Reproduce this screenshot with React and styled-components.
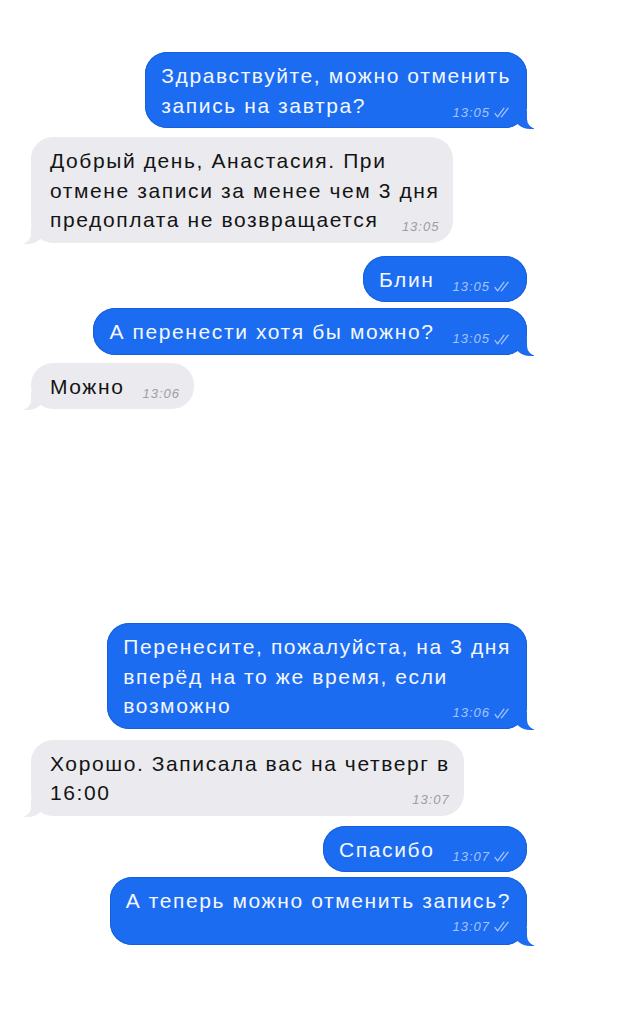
import React from 'react';
import styled, { createGlobalStyle, css } from 'styled-components';

const GlobalStyle = createGlobalStyle`
  html, body {
    margin: 0;
    background: #ffffff;
  }
  body {
    font-family: "Liberation Sans", Arial, sans-serif;
  }
`;

const BLUE = '#1c6cf1';
const GRAY = '#ebebef';

const Chat = styled.div`
  width: 640px;
  min-height: 1023px;
  box-sizing: border-box;
  padding: 52px 113px 40px 31px;
  display: flex;
  flex-direction: column;
`;

const Row = styled.div`
  display: flex;
  justify-content: ${(p) => (p.$mine ? 'flex-end' : 'flex-start')};
  margin-top: ${(p) => p.$gap}px;
`;

// little curled tail at the bottom corner, only on the last bubble of a run
const mineTail = css`
  &::before {
    content: '';
    position: absolute;
    bottom: -1px;
    right: -7px;
    width: 20px;
    height: 18px;
    background: ${BLUE};
    border-bottom-left-radius: 16px 14px;
  }
  &::after {
    content: '';
    position: absolute;
    bottom: -1px;
    right: -12px;
    width: 12px;
    height: 20px;
    background: #ffffff;
    border-bottom-left-radius: 10px;
  }
`;

const theirTail = css`
  &::before {
    content: '';
    position: absolute;
    bottom: -1px;
    left: -7px;
    width: 20px;
    height: 18px;
    background: ${GRAY};
    border-bottom-right-radius: 16px 14px;
  }
  &::after {
    content: '';
    position: absolute;
    bottom: -1px;
    left: -12px;
    width: 12px;
    height: 20px;
    background: #ffffff;
    border-bottom-right-radius: 10px;
  }
`;

const Bubble = styled.div`
  position: relative;
  display: inline-block;
  box-sizing: border-box;
  padding: ${(p) => (p.$mine ? '9px 16px 8px 16px' : '9px 14px 8px 19px')};
  border-radius: 22px;
  font-size: 21px;
  line-height: 29.5px;
  letter-spacing: 1.6px;
  white-space: nowrap;
  background: ${(p) => (p.$mine ? BLUE : GRAY)};
  color: ${(p) => (p.$mine ? '#f3f7ff' : '#141414')};
  box-shadow: ${(p) => (p.$mine ? 'inset 0 0 0 1px #1760dc' : 'none')};
  ${(p) => p.$tail && (p.$mine ? mineTail : theirTail)}
`;

const Text = styled.span`
  position: relative;
  z-index: 1;
`;

const Meta = styled.span`
  position: relative;
  z-index: 1;
  display: flex;
  align-items: center;
  gap: 3px;
  font-size: 13px;
  line-height: 16px;
  letter-spacing: 1px;
  font-style: italic;
  color: ${(p) => (p.$mine ? '#a6c3fb' : '#9d9da3')};
  ${(p) =>
    p.$stacked
      ? css`
          justify-content: flex-end;
          margin: 3px 0 2px;
        `
      : css`
          float: right;
          margin: 14px 0 -4px 18px;
        `}
`;

const Spacer = styled.div`
  height: ${(p) => p.$size}px;
  flex: none;
`;

const Ticks = () => (
  <svg width="18" height="11" viewBox="0 0 18 11" fill="none">
    <path d="M2 6.4 L4.6 9.8 L11 1.2" stroke="currentColor" strokeWidth="1.3" strokeLinecap="round" strokeLinejoin="round" />
    <path d="M8.4 9.8 L15.2 1.2" stroke="currentColor" strokeWidth="1.3" strokeLinecap="round" />
  </svg>
);

const firstPart = [
  { mine: true, tail: true, gap: 0, time: '13:05', lines: ['Здравствуйте, можно отменить', 'запись на завтра?'] },
  { mine: false, tail: true, gap: 9, time: '13:05', lines: ['Добрый день, Анастасия. При', 'отмене записи за менее чем 3 дня', 'предоплата не возвращается'] },
  { mine: true, gap: 13, time: '13:05', lines: ['Блин'] },
  { mine: true, tail: true, gap: 6, time: '13:05', lines: ['А перенести хотя бы можно?'] },
  { mine: false, tail: true, gap: 8, time: '13:06', lines: ['Можно'] },
];

const secondPart = [
  { mine: true, tail: true, gap: 0, time: '13:06', lines: ['Перенесите, пожалуйста, на 3 дня', 'вперёд на то же время, если', 'возможно'] },
  { mine: false, tail: true, gap: 11, time: '13:07', lines: ['Хорошо. Записала вас на четверг в', '16:00'] },
  { mine: true, gap: 10, time: '13:07', lines: ['Спасибо'] },
  { mine: true, tail: true, gap: 5, time: '13:07', stacked: true, lines: ['А теперь можно отменить запись?'] },
];

const Message = ({ mine, tail, gap, time, lines, stacked }) => (
  <Row $mine={mine} $gap={gap}>
    <Bubble $mine={mine} $tail={tail}>
      <Text>
        {lines.map((line, i) => (
          <React.Fragment key={i}>
            {i > 0 && <br />}
            {line}
          </React.Fragment>
        ))}
      </Text>
      <Meta $mine={mine} $stacked={stacked}>
        {time}
        {mine && <Ticks />}
      </Meta>
    </Bubble>
  </Row>
);

export default function App() {
  return (
    <>
      <GlobalStyle />
      <Chat>
        {firstPart.map((m, i) => (
          <Message key={`a${i}`} {...m} />
        ))}
        <Spacer $size={214} />
        {secondPart.map((m, i) => (
          <Message key={`b${i}`} {...m} />
        ))}
      </Chat>
    </>
  );
}
